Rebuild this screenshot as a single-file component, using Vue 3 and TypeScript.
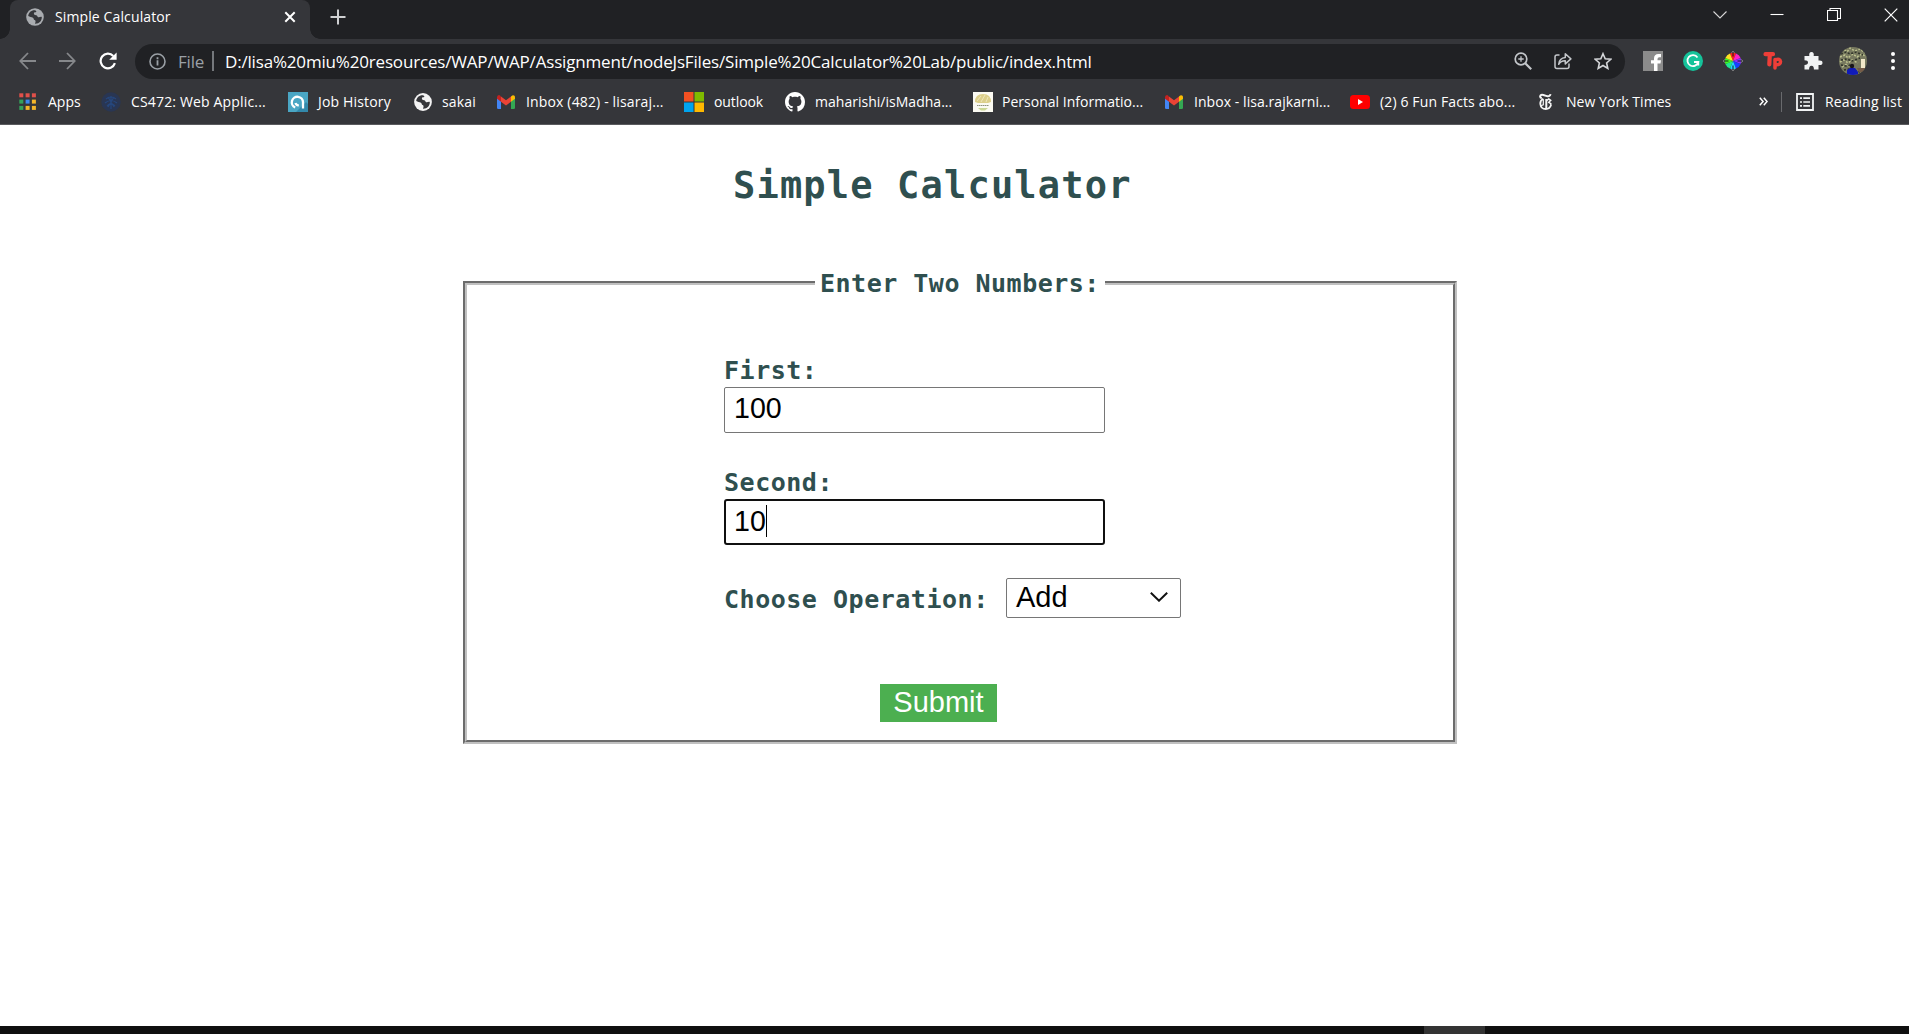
<script setup lang="ts">
import { ref } from 'vue'

interface Bookmark {
  icon: string
  label: string
  width: number
  gap: number
  spacing: number
}

const bookmarks: Bookmark[] = [
  { icon: 'apps', label: 'Apps', width: 82, gap: 11, spacing: 0 },
  { icon: 'miu', label: 'CS472: Web Applic...', width: 187, gap: 10, spacing: 0.16 },
  { icon: 'job', label: 'Job History', width: 126, gap: 10, spacing: 0.17 },
  { icon: 'globe', label: 'sakai', width: 83, gap: 10, spacing: 0.15 },
  { icon: 'gmail', label: 'Inbox (482) - lisaraj...', width: 187, gap: 11, spacing: 0.15 },
  { icon: 'ms', label: 'outlook', width: 101, gap: 10, spacing: -0.1 },
  { icon: 'github', label: 'maharishi/isMadha...', width: 188, gap: 10, spacing: 0.02 },
  { icon: 'person', label: 'Personal Informatio...', width: 192, gap: 9, spacing: 0.02 },
  { icon: 'gmail', label: 'Inbox - lisa.rajkarni...', width: 185, gap: 11, spacing: 0.06 },
  { icon: 'youtube', label: '(2) 6 Fun Facts abo...', width: 189, gap: 10, spacing: 0.13 },
  { icon: 'nyt', label: 'New York Times', width: 150, gap: 13, spacing: 0.05 }
]

const appColors = ['#e0504a', '#e0504a', '#e0504a', '#35a25a', '#3a88f0', '#f5b62a', '#35a25a', '#f5b62a', '#f5b62a']
const first = ref('100')
const second = ref('10')
</script>

<template>
  <div class="screen">
    <header class="tabs">
      <div class="tab">
        <svg class="tab-globe" width="18" height="18" viewBox="0 0 18 18">
          <circle cx="9" cy="9" r="8.800" fill="#a9acb0" />
          <path d="M9.500 2.300C6 1.600 2.600 4 2.200 8c1.500 1.200 3.200.6 4.800 1.700 1.100.9.300 1.900 1.700 2.300 1.100.3 1.100 1.500.3 3.700 4.200.2 7-3 6.800-6.700-1.200-.9-2.200.8-3.700.2-1.200-.7-.5-1.900-2-1.900-1.400 0-2.300-.7-2.200-2 .1-1.400 2.700-.5 2.500-1.700-.1-.6-1-.5-.9-1.300Z" fill="#35363a" />
        </svg>
        <span class="tab-title">Simple Calculator</span>
        <svg width="12" height="12" viewBox="0 0 12 12"><path d="M1.300 1.300l9.400 9.400M10.700 1.300l-9.400 9.400" stroke="#fff" stroke-width="2" /></svg>
      </div>
      <svg class="plus" width="16" height="16" viewBox="0 0 16 16"><path d="M8 .5v15M.5 8h15" stroke="#cfd0d2" stroke-width="2" /></svg>
      <div class="window-controls">
        <svg width="14" height="14" viewBox="0 0 14 14"><path d="M.5 3.500L7 10l6.500-6.500" fill="none" stroke="#d8d8d8" stroke-width="1.100" /></svg>
        <svg width="14" height="14" viewBox="0 0 14 14"><path d="M.5 6.500h13" stroke="#fff" stroke-width="1.100" /></svg>
        <svg width="14" height="14" viewBox="0 0 14 14"><path d="M.5 2.500h10v10h-10zM3 2.500v-2h10.500V10.500h-3" fill="none" stroke="#fff" stroke-width="1.100" /></svg>
        <svg width="14" height="14" viewBox="0 0 14 14"><path d="M.7.7l12.600 12.600M13.300.7L.7 13.300" stroke="#fff" stroke-width="1.200" /></svg>
      </div>
    </header>

    <nav class="toolbar">
      <svg class="back" width="17" height="18" viewBox="0 0 17 18"><path d="M17 9H1.500M9 1L1.300 9 9 17" fill="none" stroke="#86888b" stroke-width="1.800" /></svg>
      <svg class="forward" width="17" height="18" viewBox="0 0 17 18"><path d="M0 9h15.500M8 1l7.700 8L8 17" fill="none" stroke="#86888b" stroke-width="1.800" /></svg>
      <svg class="reload" width="18" height="18" viewBox="0 0 18 18"><path d="M15.900 11.200A7.300 7.300 0 1 1 14.300 4" fill="none" stroke="#fff" stroke-width="2.200" /><path d="M17.600.4v7.400h-7.400z" fill="#fff" /></svg>
      <div class="omnibox">
        <svg class="info" width="17" height="17" viewBox="0 0 17 17"><circle cx="8.500" cy="8.500" r="7.500" fill="none" stroke="#9aa0a6" stroke-width="1.600" /><path d="M8.500 7.300v5.200M8.500 4.300v1.900" stroke="#9aa0a6" stroke-width="1.800" /></svg>
        <span class="scheme">File</span>
        <i class="bar"></i>
        <span class="url">D:/lisa%20miu%20resources/WAP/WAP/Assignment/nodeJsFiles/Simple%20Calculator%20Lab/public/index.html</span>
        <div class="omni-icons">
          <svg width="18" height="18" viewBox="0 0 18 18"><g fill="none" stroke="#c3c6ca"><circle cx="7" cy="7" r="5.800" stroke-width="1.700" /><path d="M11.200 11.200l6 6" stroke-width="2.200" /><path d="M7 4.300v5.400M4.300 7h5.400" stroke-width="1.300" /></g></svg>
          <svg width="18" height="18" viewBox="0 0 18 18"><g fill="none" stroke="#c3c6ca" stroke-width="1.500"><path d="M5.500 3H3Q1 3 1 5v9.500q0 2 2 2h10q2 0 2-2V11.500" /><path d="M4.700 12.300Q5.300 6 11.300 5.500V1.800l5.600 5.100-5.600 5V8.800Q7 8.600 4.700 12.300Z" stroke-linejoin="round" /></g></svg>
          <svg width="18" height="18" viewBox="0 0 18 18"><path d="M9 1.700l2.200 5.100 5.600.5-4.200 3.700 1.200 5.400L9 13.500l-4.800 2.900 1.200-5.400-4.200-3.700 5.600-.5z" fill="none" stroke="#d4d6d9" stroke-width="1.600" /></svg>
        </div>
      </div>
      <div class="extensions">
        <svg width="20" height="20" viewBox="0 0 20 20"><path d="M0 0h20v20H0z" fill="#8b8b8b" /><path d="M11 20v-7.500H8V9.300h3V7.500Q11 3 15.500 3H18v3.300h-1.700q-1.800 0-1.800 1.700v1.300H18l-.5 3.200h-3V20z" fill="#fff" /></svg>
        <svg width="20" height="20" viewBox="0 0 20 20"><circle cx="10" cy="10" r="10" fill="#15c39a" /><path d="M14.500 6.500A5.500 5.500 0 1 0 15.300 11H11M15.300 10.500v4" fill="none" stroke="#fff" stroke-width="1.800" /></svg>
        <svg width="20" height="20" viewBox="0 0 20 20">
          <path d="M10 10L7 2.400A8 8 0 0 1 13 2.400z" fill="#ff2020" /><path d="M10 10L13 2.400A8 8 0 0 1 17.600 7z" fill="#ff20c8" /><path d="M10 10l7.600-3A8 8 0 0 1 17.600 13z" fill="#8a30ff" /><path d="M10 10l7.600 3A8 8 0 0 1 13 17.600z" fill="#1840ff" /><path d="M10 10l3 7.600A8 8 0 0 1 7 17.600z" fill="#20d8ff" /><path d="M10 10l-3 7.600A8 8 0 0 1 2.400 13z" fill="#20e890" /><path d="M10 10l-7.600 3A8 8 0 0 1 2.400 7z" fill="#40ff20" /><path d="M10 10L2.400 7A8 8 0 0 1 7 2.400z" fill="#ffe020" />
          <path d="M10 0v5.500M10 14.500v5.500M0 10h5.500M14.500 10h5.500" stroke="#18191b" stroke-width="1" /><path d="M8.500 2L10 0l1.500 2M2 8.500L0 10l2 1.500M18 8.500l2 1.500-2 1.500M8.500 18l1.500 2 1.500-2" fill="none" stroke="#b8b8b8" stroke-width=".6" />
        </svg>
        <svg class="tp" width="20" height="20" viewBox="0 0 20 20"><path d="M2.500 3.200h7.500M6.800 3.600l-.5 9.800" fill="none" stroke="#ee3e38" stroke-width="4.200" stroke-linecap="round" stroke-linejoin="round" /><path d="M12 17V8.500M12.500 8.700q4.500-1.600 5 1.700.3 3.800-5 3.200" fill="none" stroke="#ee3e38" stroke-width="3.500" stroke-linecap="round" /></svg>
        <svg width="20" height="20" viewBox="0 0 20 20"><path d="M1.500 5h4.800q-.6-4 2.200-4t2.200 4h4.800v4.500q4-.6 4 2.200t-4 2.200v4.600h-4.600q.2-3.800-2.400-3.800t-2.400 3.800H1.500v-4.600q3.500 0 3.500-2.300T1.500 9.300z" fill="#f1f3f4" /></svg>
      </div>
      <svg class="avatar" width="28" height="28" viewBox="0 0 28 28">
        <defs><clipPath id="avatar-clip"><circle cx="14" cy="14" r="14" /></clipPath></defs>
        <g clip-path="url(#avatar-clip)">
          <path d="M0 0h28v28H0z" fill="#77795f" />
          <path d="M0 5l4-3 4 3 3-4 5 3 5-2 5 4M1 10l5-2 3 3 5-4 4 3 5-3 4 3M1 15l4-2 4 3 4-3 6 3M3 20l5-3 3 3" fill="none" stroke="#bdc28e" stroke-width="1.500" stroke-dasharray="2 1.500" />
          <path d="M2 7l5-2 4 2 6-2 7 3M2 13l6-1 5 2 8-3M2 18l5 1 4-1M5 23l5-1 11 3" fill="none" stroke="#303429" stroke-width="1.600" stroke-dasharray="2 1.700" />
          <path d="M22 12h4v9h-4z" fill="#f2e8c9" /><path d="M18 21h8v4h-6z" fill="#755c48" />
          <path d="M8 28v-5l3-2h5l3 4v3z" fill="#101bb8" /><circle cx="13" cy="19" r="2.200" fill="#17151a" />
        </g>
      </svg>
      <svg class="menu" width="4" height="18" viewBox="0 0 4 18"><circle cx="2" cy="2" r="2" fill="#fff" /><circle cx="2" cy="9" r="2" fill="#fff" /><circle cx="2" cy="16" r="2" fill="#fff" /></svg>
    </nav>

    <nav class="bookmarks">
      <div v-for="(b, i) in bookmarks" :key="i" class="bookmark" :style="{ width: b.width + 'px', gap: b.gap + 'px' }">
        <svg v-if="b.icon === 'apps'" width="18" height="18" viewBox="0 0 18 18"><rect v-for="(c, n) in appColors" :key="n" :x="(n % 3) * 6.300 + 0.300" :y="Math.floor(n / 3) * 6.300 + 0.300" width="4" height="4" :fill="c" /></svg>
        <svg v-else-if="b.icon === 'miu'" width="20" height="20" viewBox="0 0 20 20"><circle cx="10" cy="10" r="9.700" fill="#293653" /><path d="M5 7q5-4 10 0M4 11q6-5 12 0M6 14q4-4 8 0M10 4v13M7 5l6 10M13 5L7 15" fill="none" stroke="#26477d" stroke-width="1.200" /></svg>
        <svg v-else-if="b.icon === 'job'" width="20" height="20" viewBox="0 0 20 20"><path d="M0 0h20v20H0z" fill="#4aa6c4" /><path d="M8 20l10-10 2 2v8z" fill="#3389ab" /><path d="M7.200 15.500A5.600 5.600 0 1 1 15 10.300v6.200M10.800 13.200A3 3 0 0 1 7.500 11" fill="none" stroke="#fff" stroke-width="2.300" /></svg>
        <svg v-else-if="b.icon === 'globe'" width="18" height="18" viewBox="0 0 18 18"><circle cx="9" cy="9" r="8.900" fill="#f3f3f3" /><path d="M9.500 2.300C6 1.600 2.600 4 2.200 8c1.500 1.200 3.200.6 4.800 1.700 1.100.9.300 1.900 1.700 2.300 1.100.3 1.100 1.500.3 3.700 4.200.2 7-3 6.800-6.700-1.200-.9-2.200.8-3.700.2-1.200-.7-.5-1.900-2-1.900-1.400 0-2.300-.7-2.200-2 .1-1.400 2.700-.5 2.500-1.700-.1-.6-1-.5-.9-1.300Z" fill="#35363a" /></svg>
        <svg v-else-if="b.icon === 'gmail'" width="18" height="14" viewBox="0 0 18 14"><path d="M0 2.500l4 3V14H1.200Q0 14 0 12.700z" fill="#4285f4" /><path d="M14 5.500l4-3v10.200q0 1.300-1.300 1.300H14z" fill="#34a853" /><path d="M14 1.600Q16-.5 17.500.8q.5.5.5 1.700v1.300l-4 3z" fill="#fbbc04" /><path d="M4 1.600l5 3.700 5-3.700v5.200l-5 3.800-5-3.800z" fill="#ea4335" /><path d="M0 2.500Q0 0 2 0q1 0 2 1.600v5.200l-4-3z" fill="#c5221f" /></svg>
        <svg v-else-if="b.icon === 'ms'" width="20" height="20" viewBox="0 0 20 20"><path d="M0 0h9.500v9.500H0z" fill="#f25022" /><path d="M10.500 0H20v9.500h-9.500z" fill="#7fba00" /><path d="M0 10.500h9.500V20H0z" fill="#00a4ef" /><path d="M10.500 10.500H20V20h-9.500z" fill="#ffb900" /></svg>
        <svg v-else-if="b.icon === 'github'" width="20" height="20" viewBox="0 0 16 16"><path d="M8 0C3.580 0 0 3.580 0 8c0 3.540 2.290 6.530 5.470 7.590.4.070.55-.17.55-.38 0-.19-.01-.82-.01-1.490-2.010.37-2.530-.49-2.690-.94-.09-.23-.48-.94-.82-1.130-.28-.15-.68-.52-.01-.53.63-.01 1.080.58 1.230.82.72 1.210 1.870.87 2.330.66.070-.52.280-.87.510-1.070-1.780-.2-3.640-.89-3.640-3.950 0-.87.310-1.590.82-2.150-.08-.2-.36-1.020.08-2.120 0 0 .67-.21 2.200.82.640-.18 1.320-.27 2-.27s1.360.09 2 .27c1.530-1.040 2.200-.82 2.200-.82.440 1.100.160 1.920.080 2.120.510.560.820 1.270.820 2.150 0 3.070-1.870 3.750-3.650 3.950.290.250.540.730.540 1.480 0 1.070-.01 1.930-.01 2.200 0 .210.150.460.550.380A8.010 8.010 0 0 0 16 8c0-4.420-3.580-8-8-8z" fill="#fff" /></svg>
        <svg v-else-if="b.icon === 'person'" width="20" height="20" viewBox="0 0 20 20"><path d="M0 0h20v20H0z" fill="#fbfaf2" /><path d="M2 10Q2 2 10 2t8 8l-3 1H5z" fill="#dccf8a" /><path d="M4 9l4-5M8 10l4-7M13 10l2-5" stroke="#efe7bb" /><path d="M4 13.500h12" stroke="#8d927c" stroke-dasharray="1.500 .5" /><path d="M5 16h10l-3 2.500H8z" fill="#cbd894" /></svg>
        <svg v-else-if="b.icon === 'youtube'" width="20" height="14" viewBox="0 0 20 14"><rect width="20" height="14" rx="3.500" fill="#f00" /><path d="M8 4v6l5-3z" fill="#fff" /></svg>
        <svg v-else width="14" height="18" viewBox="0 0 14 18"><g fill="none" stroke="#f5f5f5"><path d="M2.800 5.300Q.9 4.800 1.200 3.300 1.600 1.300 4.300 2l3.700 1.100q3 .7 3.500-2" stroke-width="2" /><path d="M4.300 5.800Q1 7.600 1.300 11q.6 5 5.500 5 4 0 5.200-4" stroke-width="1.800" /><path d="M7.300 6v9" stroke-width="2" /><path d="M4.300 6.300v5.500l-2.500 1" stroke-width="1.200" /><path d="M7.500 7.600l2.300-1.600 1.900 1.300-1.900 2 2 1.300v2" stroke-width="1.500" /></g></svg>
        <span :style="{ letterSpacing: b.spacing + 'px' }">{{ b.label }}</span>
      </div>
      <div class="bookmark-end">
        <svg width="9" height="9" viewBox="0 0 9 9"><path d="M.8.8l3.300 3.700L.8 8.200M4.800.8l3.300 3.700-3.300 3.700" fill="none" stroke="#fff" stroke-width="1.500" /></svg>
        <i></i>
        <svg width="18" height="18" viewBox="0 0 18 18"><path d="M1 1h16v16H1z" fill="none" stroke="#f1f3f4" stroke-width="1.800" /><path d="M4 5.200h2M7.300 5.200H14M4 9h2M7.300 9H14M4 12.800h2M7.300 12.800H14" stroke="#f1f3f4" stroke-width="1.700" /></svg>
        <span>Reading list</span>
      </div>
    </nav>

    <main>
      <h1>Simple Calculator</h1>
      <fieldset>
        <legend>Enter Two Numbers:</legend>
        <div class="form">
          <label>First:</label>
          <div class="field">{{ first }}</div>
          <label class="second-label">Second:</label>
          <div class="field focused">{{ second }}<i class="caret"></i></div>
          <div class="operation">
            <label>Choose Operation:</label>
            <div class="select">
              <span>Add</span>
              <svg width="18" height="10" viewBox="0 0 18 10"><path d="M.8.8L9 8.700 17.200.8" fill="none" stroke="#111" stroke-width="2" /></svg>
            </div>
          </div>
          <button type="button">Submit</button>
        </div>
      </fieldset>
    </main>
    <footer><i></i></footer>
  </div>
</template>

<style>
html, body { margin: 0; overflow: hidden; }
</style>

<style scoped>
* { box-sizing: border-box; }
.screen { width: 1909px; height: 1034px; display: flex; flex-direction: column; background: #fff; font-family: "Open Sans", "Noto Sans", sans-serif; color: #fff; overflow: hidden; }
svg { display: block; flex: none; }
span, label { white-space: nowrap; }

.tabs { height: 39px; flex: none; background: #202124; display: flex; align-items: flex-start; }
.tab { position: relative; width: 300px; height: 39px; margin-left: 10px; padding: 0 14px 5px 16px; background: #35363a; border-radius: 8px 8px 0 0; display: flex; align-items: center; }
.tab::before, .tab::after { content: ""; position: absolute; bottom: 0; width: 10px; height: 10px; }
.tab::before { left: -10px; background: radial-gradient(circle at 0 0, #202124 9.5px, #35363a 10px); }
.tab::after { right: -10px; background: radial-gradient(circle at 100% 0, #202124 9.5px, #35363a 10px); }
.tab-title { flex: 1; margin-left: 11px; font-size: 14px; line-height: 20px; letter-spacing: 0.12px; }
.plus { margin: 9px 0 0 20px; }
.window-controls { margin: 8px 11px 0 auto; display: flex; gap: 43px; }

.toolbar { height: 45px; flex: none; padding-bottom: 1px; background: #35363a; display: flex; align-items: center; }
.back { margin-left: 19px; }
.forward { margin-left: 23px; }
.reload { margin-left: 23px; }
.omnibox { width: 1490px; height: 35px; margin-left: 18px; padding-left: 14px; border-radius: 18px; background: #202124; display: flex; align-items: center; }
.scheme { width: 34px; margin-left: 12px; font-size: 17px; color: #9aa0a6; letter-spacing: -0.2px; }
.bar { width: 2px; height: 20px; background: #75787c; }
.url { margin-left: 11px; font-size: 17px; letter-spacing: -0.176px; }
.omni-icons { margin: 0 13px 0 auto; display: flex; gap: 22px; }
.extensions { margin-left: 18px; display: flex; gap: 20px; }
.avatar { margin-left: 16px; }
.menu { margin-left: 24px; }

.bookmarks { height: 41px; flex: none; padding: 0 7px 5px 19px; background: #35363a; border-bottom: 1px solid #5a5b5e; display: flex; align-items: center; font-size: 14px; }
.bookmark { flex: none; display: flex; align-items: center; }
.bookmark-end { margin-left: auto; display: flex; align-items: center; }
.bookmark-end i { width: 1px; height: 20px; margin: 0 14px 0 13px; background: #696a6d; }
.bookmark-end span { margin-left: 11px; width: 77px; letter-spacing: 0.18px; }

main { flex: 1; color: #2f4f4f; font-family: "DejaVu Sans Mono", monospace; font-weight: bold; }
h1 { margin: 36px 0 0 733px; height: 50px; line-height: 50px; font-size: 37px; letter-spacing: 1.170px; white-space: nowrap; }
fieldset { width: 994px; height: 478px; margin: 55px 0 0 463px; padding: 0; border: 4px groove #c0c0c0; }
legend { width: 290px; height: 34px; margin: 0 auto; padding: 0 0 0 5px; line-height: 36px; font-size: 25px; letter-spacing: 0.500px; white-space: nowrap; }
.form { padding: 52px 0 0 257px; display: flex; flex-direction: column; align-items: flex-start; }
label { display: block; height: 35px; line-height: 37px; font-size: 25px; letter-spacing: 0.520px; }
.field { width: 381px; height: 46px; padding: 0 9px 4px; border: 1px solid #767676; border-radius: 2px; background: #fff; display: flex; align-items: center; font: 28.600px/42px "Liberation Sans", Arial, sans-serif; color: #000; }
.second-label { margin-top: 31px; }
.focused { border: 2px solid #101010; border-radius: 3px; padding: 0 8px 3px; }
.caret { width: 1px; height: 32px; background: #000; margin-top: 0; }
.operation { margin-top: 33px; height: 40px; display: flex; align-items: center; }
.operation label { width: 282px; }
.select { width: 175px; height: 40px; padding: 0 12px 2px 9px; border: 1px solid #767676; border-radius: 2px; display: flex; align-items: center; justify-content: space-between; font: 29px/36px "Liberation Sans", Arial, sans-serif; color: #000; }
button { width: 117px; height: 38px; margin: 66px 0 0 156px; padding: 0 0 2px; border: 0; background: #4caf50; color: #fff; font: 29px/36px "Liberation Sans", Arial, sans-serif; }
footer { height: 8px; flex: none; background: #101010; }
footer i { display: block; width: 61px; height: 8px; margin-left: 1424px; background: #333; }
</style>
